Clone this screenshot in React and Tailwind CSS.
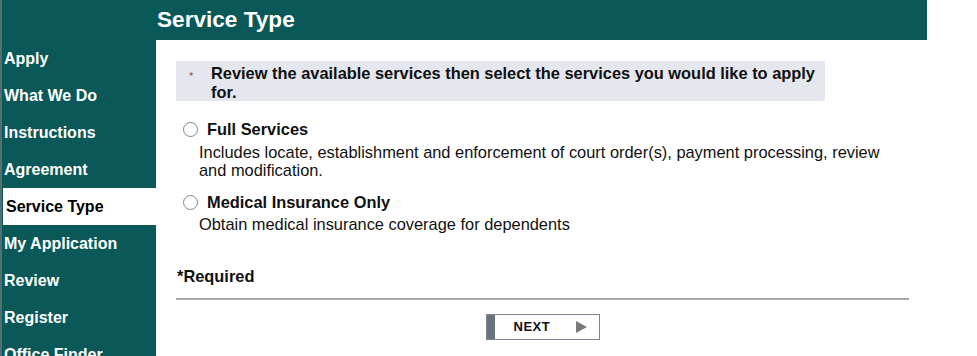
import React from 'react';

const navItems = [
  'Apply',
  'What We Do',
  'Instructions',
  'Agreement',
  'Service Type',
  'My Application',
  'Review',
  'Register',
  'Office Finder',
];

const Radio = () => (
  <span className="inline-block w-[15px] h-[15px] rounded-full border border-[#858585] bg-white shrink-0" />
);

const App = () => {
  return (
    <div
      className="w-[927px] h-[356px] overflow-hidden bg-[#0a5858] border-l-2 border-[#52706f]"
      style={{ fontFamily: '"Liberation Sans", Arial, sans-serif' }}
    >
      {/* Header */}
      <div className="h-[40px] pl-[155px] flex items-center">
        <h1 className="text-white font-bold text-[22.6px] leading-none">Service Type</h1>
      </div>

      <div className="flex">
        {/* Sidebar */}
        <nav className="w-[154px] shrink-0 flex flex-col">
          {navItems.map((item) =>
            item === 'Service Type' ? (
              <div
                key={item}
                className="h-[37px] ml-[1px] pl-[3px] bg-white flex items-center text-black font-bold text-[16px]"
              >
                {item}
              </div>
            ) : (
              <div key={item} className="h-[37px] pl-[2px] flex items-center text-white font-bold text-[16px]">
                {item}
              </div>
            )
          )}
        </nav>

        {/* Content */}
        <main className="flex-1 bg-white h-[316px] pl-[20px] pr-[18px] pt-[21px] text-[#111] text-[16.4px]">
          <div className="w-[649px] h-[40px] bg-[#e4e7ee] flex pl-[13px] pt-[3px]">
            <span className="text-[#8a4a5a] text-[11px] leading-[19px] mt-[3px] w-[22px] shrink-0">*</span>
            <p className="font-bold leading-[19px] w-[612px]">
              Review the available services then select the services you would like to apply for.
            </p>
          </div>

          <div className="mt-[19px] pl-[7px]">
            <label className="flex items-center gap-[9px] h-[18px]">
              <Radio />
              <span className="font-bold">Full Services</span>
            </label>
            <p className="pl-[16px] pr-[8px] mt-[5px] leading-[18px]">
              Includes locate, establishment and enforcement of court order(s), payment processing, review and modification.
            </p>
          </div>

          <div className="mt-[14px] pl-[7px]">
            <label className="flex items-center gap-[9px] h-[18px]">
              <Radio />
              <span className="font-bold">Medical Insurance Only</span>
            </label>
            <p className="pl-[16px] mt-[4px] leading-[18px]">
              Obtain medical insurance coverage for dependents
            </p>
          </div>

          <p className="mt-[34px] font-bold leading-[18px] pl-[1px]">*Required</p>

          <div className="mt-[13px] h-[2px] bg-[#a8a8a8]" />

          <div className="flex justify-center mt-[14px]">
            <button className="w-[114px] h-[26px] flex items-stretch border border-[#7d8593] bg-white">
              <span className="w-[8px] bg-[#6b7280]" />
              <span className="flex-1 flex items-center pl-[19px] pr-[12px]">
                <span className="font-bold text-[13px] tracking-[0.5px] text-[#111]">NEXT</span>
                <svg className="ml-auto" width="11" height="12" viewBox="0 0 11 12">
                  <path d="M0 0 L11 6 L0 12 Z" fill="#7a7a7a" />
                </svg>
              </span>
            </button>
          </div>
        </main>
      </div>
    </div>
  );
};

export default App;
